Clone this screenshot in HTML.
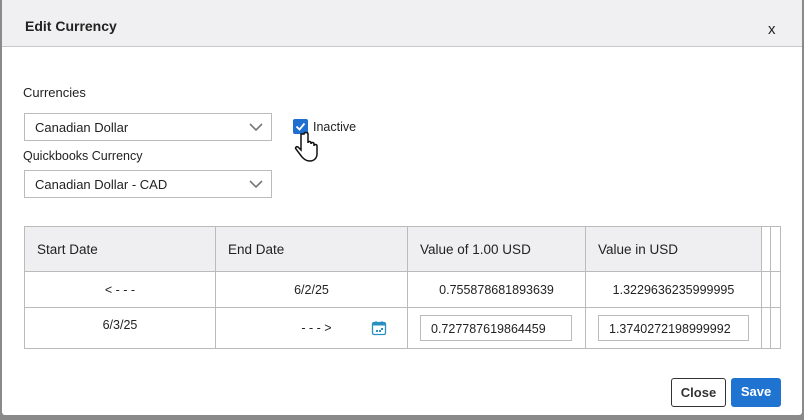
<!DOCTYPE html>
<html><head><style>
body{margin:0;width:804px;height:420px;background:#8a8a8a;font-family:"Liberation Sans",sans-serif;color:#222;position:relative;overflow:hidden}
.m{position:absolute;left:2px;top:0;width:800px;height:415px;background:#fff;border-radius:3px}
.hd{position:absolute;left:0;top:0;width:800px;height:46px;background:#f0f0f2;border-bottom:1px solid #c8c8c8}
.t{position:absolute;font-size:13px}
.sel{position:absolute;left:22px;width:248px;height:28px;border:1px solid #bbb;font-size:13px;line-height:28px;padding-left:10px;box-sizing:border-box}
.sel svg{position:absolute;right:8px;top:9px}
table{position:absolute;left:22px;top:226px;border-collapse:collapse;font-size:13px;table-layout:fixed;width:756px}
td{border:1px solid #bbb;padding:0;overflow:hidden;white-space:nowrap}
.h td{background:#efeff1;height:44px;padding-left:12px;font-size:13.5px}
.inp{border:1px solid #bbb;height:26px;line-height:26px;padding-left:10px;box-sizing:border-box;margin-left:12px;font-size:12.5px}
.btn{position:absolute;top:378px;height:29px;border-radius:3px;font-size:13px;font-weight:bold;text-align:center;line-height:28px;box-sizing:border-box}
</style></head><body>
<div class="m">
<div class="hd"><div class="t" style="left:23px;top:18px;font-weight:bold;font-size:14px">Edit Currency</div><div class="t" style="left:766px;top:21px;font-size:15px">x</div></div>
<div class="t" style="left:21px;top:85px">Currencies</div>
<div class="sel" style="top:113px">Canadian Dollar<svg width="14" height="9"><path d="M1 1l6 6 6-6" fill="none" stroke="#777" stroke-width="1.6"/></svg></div>
<div class="t" style="left:21px;top:149px;font-size:12.5px">Quickbooks Currency</div>
<div class="sel" style="top:170px">Canadian Dollar - CAD<svg width="14" height="9"><path d="M1 1l6 6 6-6" fill="none" stroke="#777" stroke-width="1.6"/></svg></div>
<div style="position:absolute;left:291px;top:119px;width:15px;height:15px;background:#1f6fd1;border-radius:2px"><svg width="15" height="15"><path d="M3.5 7.5l3 3 5-6" fill="none" stroke="#fff" stroke-width="1.8"/></svg></div>
<div class="t" style="left:311px;top:120px;font-size:12.5px">Inactive</div>
<svg style="position:absolute;left:291px;top:130px" width="28" height="36"><path d="M8 4v16l-3-3c-2-1-3 1-2 2l6 8c2 2 4 4 8 4 4 0 7-3 7-7v-8c0-2-3-2-3 0v-2c0-2-3-2-3 0v-1c0-2-3-2-3 0V4c0-2-4-2-4 0z" fill="#fff" stroke="#111" stroke-width="1.5"/></svg>
<table>
<colgroup><col style="width:191px"><col style="width:192px"><col style="width:178px"><col style="width:176px"><col style="width:9px"><col style="width:10px"></colgroup>
<tr class="h"><td>Start Date</td><td>End Date</td><td>Value of 1.00 USD</td><td>Value in USD</td><td style="padding:0;background:#fff"></td><td style="padding:0;background:#fff"></td></tr>
<tr style="height:36px;text-align:center;font-size:12.5px"><td>&lt; - - -</td><td>6/2/25</td><td>0.755878681893639</td><td>1.3229636235999995</td><td></td><td></td></tr>
<tr style="height:41px;font-size:12.5px"><td style="text-align:center;vertical-align:top;padding-top:10px">6/3/25</td><td style="position:relative;text-align:center"><span style="margin-right:-10px">- - - &gt;</span><svg style="position:absolute;right:20px;top:12px" width="16" height="16"><rect x="1.5" y="2.5" width="13" height="12" rx="1.5" fill="none" stroke="#2a8fc1" stroke-width="1.3"/><rect x="1.5" y="2.5" width="13" height="3" fill="#2a8fc1"/><path d="M5 1v3M11 1v3" stroke="#2a8fc1"/><rect x="5" y="10" width="2" height="2" fill="#2a8fc1"/><rect x="8" y="10" width="2" height="2" fill="#2a8fc1"/><rect x="10" y="8" width="2" height="2" fill="#2a8fc1"/></svg></td><td><div class="inp" style="width:152px">0.727787619864459</div></td><td><div class="inp" style="width:151px">1.3740272198999992</div></td><td></td><td></td></tr>
</table>
<div class="btn" style="left:669px;width:55px;border:1px solid #333;color:#333;background:#fff">Close</div>
<div class="btn" style="left:729px;width:50px;background:#1f74d1;color:#fff">Save</div>
</div>
</body></html>
